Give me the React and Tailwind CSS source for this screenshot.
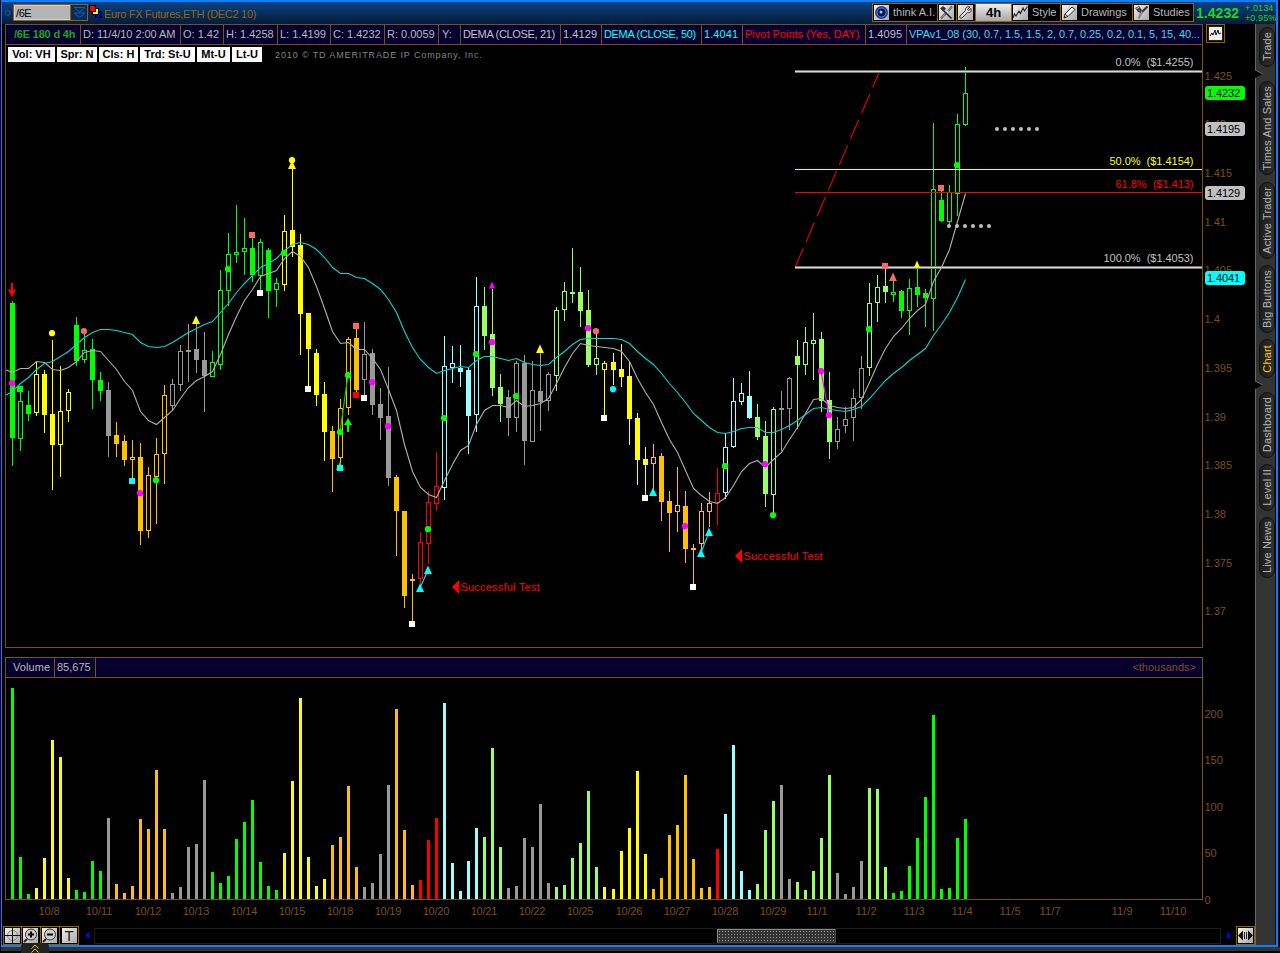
import { Fragment } from 'react';

const COLORS = {
  g: '#00ff00',
  y: '#ffff00',
  o: '#ffc000',
  n: '#999999',
  r: '#ff0000',
  a: '#99ffff',
  l: '#99ff66',
  m: '#ff00ff',
  c: '#00ffff',
  s: '#ff6666',
  w: '#ffffff',
};

// [color, high, low, body top, body bottom, hollow, volume top]
const candles = [
  ['g', 301, 466, 303, 438, 0, 688], ['g', 388, 451, 401, 439, 1, 857], ['g', 391, 421, 405, 414, 0, 894],
  ['y', 362, 416, 374, 413, 1, 888], ['y', 370, 433, 374, 415, 0, 858], ['y', 340, 490, 414, 445, 0, 740],
  ['y', 366, 477, 411, 445, 1, 757], ['y', 389, 422, 392, 411, 1, 878], ['g', 317, 366, 325, 361, 0, 890],
  ['g', 333, 363, 350, 360, 1, 892], ['g', 339, 409, 349, 380, 0, 861], ['g', 372, 401, 380, 391, 0, 871],
  ['n', 382, 457, 390, 436, 0, 818], ['o', 422, 457, 435, 444, 0, 884], ['o', 435, 466, 441, 460, 0, 893],
  ['o', 440, 478, 457, 460, 1, 886], ['o', 443, 545, 457, 531, 0, 819], ['o', 467, 538, 475, 531, 1, 829],
  ['o', 438, 524, 454, 477, 1, 770], ['o', 385, 484, 395, 454, 1, 829], ['n', 379, 410, 384, 406, 1, 893],
  ['n', 345, 391, 351, 385, 1, 887], ['n', 324, 382, 350, 352, 0, 847], ['n', 324, 373, 349, 360, 0, 844],
  ['n', 332, 412, 360, 376, 0, 780], ['g', 351, 377, 362, 377, 1, 872], ['g', 270, 370, 290, 365, 1, 883],
  ['g', 233, 306, 254, 291, 1, 876], ['g', 205, 263, 252, 255, 1, 839], ['g', 218, 275, 248, 252, 1, 822],
  ['g', 237, 282, 248, 275, 0, 800], ['g', 239, 290, 242, 276, 1, 862], ['g', 248, 318, 250, 291, 0, 886],
  ['g', 278, 307, 283, 290, 1, 890], ['y', 215, 291, 231, 285, 1, 853], ['y', 168, 257, 230, 247, 0, 781],
  ['y', 234, 355, 245, 314, 0, 698], ['y', 313, 387, 313, 349, 0, 857], ['y', 349, 406, 353, 395, 0, 886],
  ['y', 382, 461, 394, 432, 0, 879], ['o', 426, 492, 431, 459, 0, 845], ['o', 399, 463, 408, 458, 1, 837],
  ['o', 337, 415, 339, 408, 1, 786], ['o', 328, 393, 338, 390, 0, 867], ['n', 322, 395, 354, 380, 1, 887],
  ['n', 349, 415, 353, 405, 0, 883], ['n', 388, 440, 404, 418, 0, 854], ['n', 367, 486, 416, 478, 0, 785],
  ['o', 475, 556, 477, 511, 0, 709], ['o', 511, 608, 511, 596, 0, 830], ['o', 574, 621, 579, 581, 0, 885],
  ['r', 532, 586, 542, 579, 1, 880], ['r', 491, 564, 502, 544, 1, 840], ['r', 452, 511, 486, 504, 1, 818],
  ['a', 336, 500, 366, 488, 1, 703], ['a', 346, 383, 363, 368, 1, 863], ['a', 345, 387, 368, 372, 0, 891],
  ['a', 368, 454, 370, 416, 0, 861], ['a', 277, 432, 306, 415, 1, 828], ['l', 287, 350, 306, 336, 0, 837],
  ['l', 289, 396, 334, 388, 0, 748], ['l', 374, 422, 387, 404, 0, 847], ['n', 390, 436, 397, 418, 0, 888],
  ['n', 361, 432, 363, 418, 1, 886], ['n', 355, 465, 363, 441, 0, 838], ['n', 361, 442, 390, 442, 1, 847],
  ['n', 353, 431, 391, 402, 0, 804], ['n', 372, 411, 374, 401, 1, 883], ['l', 307, 391, 310, 376, 1, 887],
  ['l', 282, 321, 291, 310, 1, 885], ['l', 248, 303, 292, 294, 0, 858], ['l', 267, 327, 292, 311, 0, 843],
  ['l', 290, 367, 310, 365, 0, 791], ['l', 334, 375, 358, 365, 1, 867], ['y', 361, 415, 363, 370, 1, 887],
  ['y', 353, 385, 362, 370, 0, 889], ['y', 344, 387, 369, 377, 0, 851], ['y', 361, 445, 376, 419, 0, 828],
  ['y', 413, 485, 418, 460, 0, 771], ['y', 447, 495, 459, 465, 0, 854], ['o', 444, 489, 457, 464, 1, 889],
  ['o', 453, 521, 456, 502, 0, 878], ['o', 491, 552, 501, 513, 0, 835], ['o', 467, 532, 505, 512, 1, 825],
  ['o', 491, 563, 506, 549, 0, 775], ['o', 544, 584, 548, 550, 0, 859], ['o', 503, 550, 511, 544, 1, 888],
  ['o', 492, 527, 503, 512, 1, 887], ['r', 468, 525, 493, 503, 1, 849], ['a', 433, 499, 447, 493, 1, 814],
  ['a', 378, 448, 401, 447, 1, 745], ['a', 383, 405, 393, 402, 1, 871], ['a', 371, 419, 396, 418, 0, 890],
  ['l', 404, 440, 417, 437, 0, 884], ['l', 421, 507, 436, 494, 0, 830], ['l', 407, 513, 409, 495, 1, 801],
  ['n', 391, 451, 408, 410, 0, 785], ['n', 377, 430, 378, 409, 1, 879], ['l', 340, 429, 356, 365, 0, 882],
  ['l', 327, 375, 342, 365, 1, 890], ['l', 313, 380, 340, 344, 1, 871], ['l', 332, 412, 339, 401, 0, 838],
  ['l', 372, 459, 400, 442, 0, 775], ['n', 417, 449, 429, 442, 1, 873], ['n', 407, 433, 419, 426, 1, 894],
  ['n', 389, 441, 398, 418, 1, 887], ['n', 356, 409, 368, 398, 1, 861], ['l', 283, 376, 303, 368, 1, 788],
  ['l', 275, 322, 287, 303, 1, 789], ['l', 269, 303, 286, 292, 0, 867], ['g', 281, 302, 292, 295, 1, 893],
  ['g', 290, 318, 291, 311, 0, 891], ['g', 279, 335, 288, 311, 1, 866], ['g', 267, 307, 287, 295, 0, 838],
  ['g', 289, 327, 293, 298, 0, 797], ['g', 123, 331, 189, 299, 1, 715], ['g', 191, 222, 200, 221, 0, 889],
  ['g', 185, 225, 192, 222, 1, 888], ['g', 114, 216, 124, 194, 1, 838], ['g', 67, 126, 93, 125, 1, 819],
];

const dema21 = [
  372, 368, 368, 361, 362, 369, 370, 367, 361, 352, 350, 351, 360, 369, 381, 390, 411, 420, 424, 417,
  410, 398, 387, 380, 376, 371, 354, 334, 316, 300, 289, 276, 273, 270, 258, 251, 256, 267, 286, 308,
  331, 343, 342, 349, 349, 358, 369, 389, 410, 444, 471, 487, 494, 497, 480, 464, 450, 445, 424, 410,
  405, 405, 407, 400, 406, 405, 403, 398, 383, 367, 353, 343, 345, 346, 347, 348, 351, 361, 378, 392,
  404, 422, 439, 452, 470, 488, 495, 501, 503, 497, 485, 471, 463, 460, 467, 459, 452, 439, 427, 413,
  399, 398, 405, 407, 408, 407, 399, 382, 364, 348, 336, 328, 318, 310, 304, 281, 267, 249, 221, 193,
];

const dema50 = [
  391, 383, 377, 369, 363, 361, 356, 351, 344, 337, 332, 329, 329, 330, 332, 334, 342, 346, 347, 346,
  342, 337, 332, 328, 324, 321, 312, 303, 292, 283, 275, 267, 263, 258, 250, 244, 242, 244, 249, 257,
  267, 273, 273, 277, 278, 283, 289, 299, 312, 331, 347, 359, 367, 373, 370, 368, 366, 367, 360, 356,
  356, 358, 360, 358, 362, 364, 365, 364, 357, 351, 344, 339, 338, 338, 338, 338, 339, 343, 351, 358,
  364, 373, 383, 392, 402, 413, 420, 427, 432, 433, 431, 428, 427, 427, 432, 432, 429, 425, 420, 414,
  408, 407, 409, 410, 411, 409, 406, 398, 389, 380, 373, 367, 360, 354, 348, 335, 324, 312, 297, 279,
];

// [shape, color, x, y]
const markers = [
  ['dot', 'm', 12, 383], ['sq', 'g', 20, 389], ['dot', 'y', 52, 333], ['dot', 's', 84, 331],
  ['sq', 'c', 132, 481], ['dot', 'm', 140, 493], ['dot', 'g', 156, 480], ['tri', 'y', 196, 320],
  ['dot', 'g', 228, 269], ['sq', 's', 252, 235], ['sq', 'w', 260, 293], ['dot', 'g', 284, 253],
  ['dot', 'y', 292, 160], ['tri', 'y', 292, 165], ['sq', 'w', 308, 389], ['tri', 'g', 340, 466],
  ['dot', 'g', 340, 432], ['sq', 'c', 340, 468], ['dot', 'g', 348, 375], ['sq', 's', 356, 326],
  ['sq', 'r', 356, 395], ['sq', 'w', 364, 398], ['dot', 'm', 372, 382], ['dot', 'm', 388, 426],
  ['sq', 'w', 412, 624], ['tri', 'c', 420, 588], ['dot', 'g', 428, 529], ['tri', 'c', 428, 570],
  ['dot', 'g', 444, 418], ['dot', 'g', 476, 354], ['small', 'm', 492, 285], ['dot', 'm', 492, 342],
  ['dot', 'g', 516, 396], ['tri', 'y', 540, 349], ['dot', 'm', 588, 328], ['dot', 's', 596, 331],
  ['sq', 'w', 604, 418], ['dot', 'c', 613, 389], ['sq', 'w', 645, 498], ['tri', 'c', 653, 492],
  ['dot', 'm', 685, 526], ['sq', 'w', 693, 587], ['tri', 'c', 701, 553], ['tri', 'c', 709, 532],
  ['dot', 'g', 725, 466], ['dot', 'm', 765, 464], ['dot', 'g', 773, 515], ['dot', 'm', 821, 371],
  ['dot', 'm', 829, 415], ['dot', 'g', 869, 329], ['sq', 's', 885, 266], ['tri', 's', 893, 277],
  ['small', 'y', 917, 264], ['sq', 's', 941, 188], ['dot', 'g', 957, 165],
];

const dates = [
  ['10/8', 49], ['10/11', 99], ['10/12', 148], ['10/13', 196], ['10/14', 244], ['10/15', 292],
  ['10/18', 340], ['10/19', 388], ['10/20', 436], ['10/21', 484], ['10/22', 532], ['10/25', 580],
  ['10/26', 629], ['10/27', 677], ['10/28', 725], ['10/29', 773], ['11/1', 817], ['11/2', 866],
  ['11/3', 914], ['11/4', 962], ['11/5', 1010], ['11/7', 1050], ['11/9', 1122], ['11/10', 1173],
];

const prices = [
  ['1.425', 76], ['1.42', 124], ['1.415', 173], ['1.41', 222], ['1.405', 270], ['1.4', 319],
  ['1.395', 368], ['1.39', 417], ['1.385', 465], ['1.38', 514], ['1.375', 563], ['1.37', 611],
];

const priceTags = [
  ['1.4232', 93, '#00ff00'],
  ['1.4195', 129, '#c0c0c0'],
  ['1.4129', 193, '#c0c0c0'],
  ['1.4041', 278, '#00ffff'],
];

const headerCells = [
  ['/6E 180 d 4h', 'w-[75px] pl-2 font-bold text-[#1ba324] tracking-[-0.2px]'],
  ['D: 11/4/10 2:00 AM', 'w-[100px] pl-0.5 tracking-[-0.05px] text-[#b8b8b8]'],
  ['O: 1.42', 'w-[43px] pl-0.5 text-[#b8b8b8]'],
  ['H: 1.4258', 'w-[54px] pl-0.5 text-[#b8b8b8]'],
  ['L: 1.4199', 'w-[53px] pl-0.5 text-[#b8b8b8]'],
  ['C: 1.4232', 'w-[54px] pl-0.5 text-[#b8b8b8]'],
  ['R: 0.0059', 'w-[54px] pl-0.5 text-[#b8b8b8]'],
  ['Y:', 'w-[22px] pl-[3px] text-[#b8b8b8]'],
  ['DEMA (CLOSE, 21)', 'w-[100px] pl-0.5 tracking-[-0.33px] text-[#c0c0c0]'],
  ['1.4129', 'w-[41px] pl-0.5 tracking-[0.1px] text-[#c0c0c0]'],
  ['DEMA (CLOSE, 50)', 'w-[100px] pl-0.5 tracking-[-0.33px] text-[#00ffff]'],
  ['1.4041', 'w-[41px] pl-0.5 tracking-[0.1px] text-[#00ffff]'],
  ['Pivot Points (Yes, DAY)', 'w-[123px] pl-0.5 text-[#ff0000]'],
  ['1.4095', 'w-[41px] pl-0.5 tracking-[0.1px] text-[#c0c0c0]'],
  ['VPAv1_08 (30, 0.7, 1.5, 1.5, 2, 0.7, 0.25, 0.2, 0.1, 5, 15, 40...', 'w-[296px] pl-0.5 tracking-[-0.08px] text-[#33ddee]'],
];

const chips = [
  ['Vol: VH', 'w-[47px]'],
  ['Spr: N', 'w-10'],
  ['Cls: H', 'w-[39px]'],
  ['Trd: St-U', 'w-[55px]'],
  ['Mt-U', 'w-[33px]'],
  ['Lt-U', 'w-[30px]'],
];

const tabs = [
  ['Trade', 'h-10 mt-[3px]'],
  ['Times And Sales', 'h-[94px] mt-3.5'],
  ['Active Trader', 'h-[77px] mt-[7px]'],
  ['Big Buttons', 'h-[68px] mt-1.5'],
  ['Chart', 'h-[39px] mt-[6px]'],
  ['Dashboard', 'h-[66px] mt-[14px]'],
  ['Level II', 'h-[47px] mt-1.5'],
  ['Live News', 'h-[61px] mt-1.5'],
];

const xAt = (i) => 12 + i * 8 + (i >= 75 ? 1 : 0);

const linePoints = (values, start) =>
  `6,${start} ` + values.map((v, i) => `${xAt(i) + 0.5},${v + 0.5}`).join(' ');

function Candle({ candle, x }) {
  const [color, high, low, top, bottom, hollow] = candle;
  const fill = COLORS[color];
  if (!hollow) {
    return (
      <g fill={fill}>
        <rect x={x} y={high} width="1" height={low - high} />
        <rect x={x - 2} y={top} width="5" height={bottom - top} />
      </g>
    );
  }
  return (
    <g fill={fill}>
      <rect x={x} y={high} width="1" height={Math.max(top - high, 0)} />
      <rect x={x} y={bottom} width="1" height={Math.max(low - bottom, 0)} />
      <rect x={x - 1.5} y={top + 0.5} width="4" height={bottom - top - 1} fill="none" stroke={fill} />
    </g>
  );
}

function Marker({ shape, color, x, y }) {
  const fill = COLORS[color];
  if (shape === 'dot') return <circle cx={x} cy={y + 0.2} r="3.1" fill={fill} />;
  if (shape === 'sq') return <rect x={x - 3} y={y - 3} width="6" height="6" fill={fill} />;
  if (shape === 'small') return <path d={`M${x} ${y - 3.5}l3 7h-6z`} fill={fill} />;
  return <path d={`M${x} ${y - 4.5}l4 8.5h-8z`} fill={fill} />;
}

function PriceChart() {
  return (
    <svg width="1253" height="612" viewBox="2 45 1253 612" className="block" fontSize="11">
      <path d="M5.5 45V647.5H1202.5V45" fill="none" stroke="#7b4f1a" shapeRendering="crispEdges" />

      <g shapeRendering="crispEdges">
        {candles.map((candle, i) => (
          <Candle key={i} candle={candle} x={xAt(i)} />
        ))}
      </g>

      {/* fib retracement */}
      <path d="M795 267.5L879.5 71.5" stroke="#dd0000" strokeWidth="1.2" strokeDasharray="21 7" />
      <g shapeRendering="crispEdges">
        <rect x="795" y="70" width="407" height="3" fill="#777" />
        <rect x="795" y="71" width="407" height="1" fill="#d8d8d8" />
        <rect x="795" y="169" width="407" height="1" fill="#ffff00" />
        <rect x="795" y="192" width="407" height="1" fill="#ff0000" />
        <rect x="795" y="266" width="407" height="3" fill="#777" />
        <rect x="795" y="267" width="407" height="1" fill="#d8d8d8" />
      </g>
      <g textAnchor="end">
        <text x="1193.5" y="66" fill="#c0c0c0" textLength="78">0.0%{'\u00a0\u00a0'}($1.4255)</text>
        <text x="1193.5" y="165" fill="#ffff00" textLength="84">50.0%{'\u00a0\u00a0'}($1.4154)</text>
        <text x="1193.5" y="188" fill="#ff0000" textLength="78">61.8%{'\u00a0\u00a0'}($1.413)</text>
        <text x="1193.5" y="262" fill="#c0c0c0" textLength="90">100.0%{'\u00a0\u00a0'}($1.4053)</text>
      </g>

      <polyline points={linePoints(dema50, 395)} fill="none" stroke="#00d8d8" strokeWidth="1.1" />
      <polyline points={linePoints(dema21, 370)} fill="none" stroke="#b0b0b0" strokeWidth="1.1" />

      {[0, 1, 2, 3, 4, 5].map((i) => (
        <Fragment key={i}>
          <circle cx={997 + i * 8} cy="129" r="2" fill="#c0c0c0" />
          <circle cx={949 + i * 8} cy="226" r="2" fill="#c0c0c0" />
        </Fragment>
      ))}

      <path d="M340 432L348 375" stroke="#00cc00" strokeWidth="1.2" />
      <path d="M420 588L428 570M701 553L709 532" stroke="#00dddd" strokeWidth="1.2" />
      <path d="M821 371L829 415" stroke="#ff00ff" strokeWidth="1.2" />
      {markers.map(([shape, color, x, y], i) => (
        <Marker key={i} shape={shape} color={color} x={x} y={y} />
      ))}
      <path d="M11 283h2v6.500h3L12 297L8 289.500h3z" fill="#ff0000" />
      <path d="M347 432v-7h-3L348 418L352 425h-3v7z" fill="#00ff00" />

      <g fill="#ff0000">
        <path d="M452 587l7-7v14z" />
        <text x="460.500" y="591" textLength="79">Successful Test</text>
        <path d="M735 556l7-7v14z" />
        <text x="743.500" y="560" textLength="79">Successful Test</text>
      </g>

      <g fill="#7b4f1a">
        {prices.map(([label, y]) => (
          <text key={label} x="1204.500" y={y + 4}>
            {label}
          </text>
        ))}
      </g>
      {priceTags.map(([label, y, fill]) => (
        <g key={label}>
          <rect x="1205" y={y - 7} width="40" height="14" rx="3" fill={fill} />
          <text x="1207" y={y + 4} fill="#000" textLength="33">{label}</text>
        </g>
      ))}
    </svg>
  );
}

function VolumeChart() {
  return (
    <svg width="1253" height="248" viewBox="2 678 1253 248" className="block" fontSize="11">
      <path d="M5.5 678V899.5H1202.5V678" fill="none" stroke="#7b4f1a" shapeRendering="crispEdges" />
      {candles.map((candle, i) => (
        <rect key={i} x={xAt(i) - 1} y={candle[6]} width="3" height={899 - candle[6]} fill={COLORS[candle[0]]} />
      ))}
      <g fill="#7b4f1a">
        {[[200, 714], [150, 760], [100, 807], [50, 853], [0, 900]].map(([label, y]) => (
          <text key={label} x="1204.500" y={y + 4}>{label}</text>
        ))}
        {dates.map(([label, x]) => (
          <text key={label} x={x} y="915" textAnchor="middle" textLength={label.length * 5.3}>
            {label}
          </text>
        ))}
      </g>
    </svg>
  );
}

function IconBox({ children }) {
  return (
    <svg width="17" height="17" viewBox="0 0 17 17" className="shrink-0 block">
      <defs>
        <linearGradient id="steel" x1="0" y1="0" x2="1" y2="1">
          <stop offset="0" stopColor="#f0f0f0" />
          <stop offset="1" stopColor="#aaaaaa" />
        </linearGradient>
      </defs>
      <rect x="1" y="1" width="15" height="15" fill="url(#steel)" />
      {children}
    </svg>
  );
}

function ToolsIcon() {
  return (
    <IconBox>
      <path d="M14 2.500L10 7M8.500 8.500L3 14.500" fill="none" stroke="#444" strokeWidth="2" />
      <path d="M13.500 3L3.500 14" fill="none" stroke="#eee" strokeWidth="0.7" />
      <path d="M4 5l9.500 9.500" fill="none" stroke="#222" strokeWidth="1.6" />
      <path d="M2 4.500L5 2l3 2.500L5.500 7.500z" fill="#333" />
    </IconBox>
  );
}

function WrenchIcon() {
  return (
    <IconBox>
      <path d="M13 3l-2.500 2.500 1 1L14 4.500c1 3-1 4.500-3.500 4L5 14c-1.500 1-3-.5-2-2l5.500-5.500C8 4 10 2 13 3z" fill="#ddd" stroke="#333" />
    </IconBox>
  );
}

function LineIcon() {
  return (
    <IconBox>
      <path d="M1 14l1.500-4 1.500 2 3-5 1.500 2.500L11 4l1.500 3L15.500 2.500" fill="none" stroke="#222" strokeWidth="1.1" />
    </IconBox>
  );
}

function PencilIcon() {
  return (
    <IconBox>
      <path d="M3 14l1-4 7-7 3 2.500-7 7zM4 10l3 2.500" fill="#f5f5f5" stroke="#222" />
      <path d="M3 14l.5-2 1.500 1z" fill="#111" />
    </IconBox>
  );
}

function StudiesIcon() {
  return (
    <IconBox>
      <path d="M14.500 2.500L9 8" stroke="#333" strokeWidth="2.200" />
      <path d="M9 7.500L5.500 14.500" stroke="#888" strokeWidth="2.400" />
      <path d="M2 4l4-2 3 4-1.500 3L5 8z" fill="#444" />
      <path d="M3.500 4.500L6 3.500" stroke="#ddd" />
    </IconBox>
  );
}

function ToolButton({ className, icon, label }) {
  return (
    <button className={`flex h-[19px] items-center border-y border-r border-[#966200] bg-black text-[11px] text-[#b8b8b8] ${className}`}>
      {icon}
      {label && <span className="ml-[3px] whitespace-nowrap">{label}</span>}
    </button>
  );
}

function TitleBar() {
  return (
    <div className="flex h-[22px] shrink-0 bg-gradient-to-b from-[#0c4284] to-[#041c38] pl-[3px]">
      <svg width="8" height="22" viewBox="0 0 8 22">
        <circle cx="2.500" cy="11" r="2.500" fill="none" stroke="#0a5ab0" />
      </svg>
      <div className="mt-0.5 flex h-[17px] w-[75px] border border-[#966200]">
        <div className="w-14 border border-r-0 border-[#d0d0d0] bg-[#b4b4b4] pl-px text-[11px] leading-[15px] tracking-[-0.4px] text-black">/6E</div>
        <div className="flex flex-1 items-center justify-center border-l border-[#966200] bg-[#082b55]">
          <svg width="13" height="13" viewBox="0 0 13 13" fill="none" stroke="#0a60c0">
            <path d="M1 1.500h11L6.500 6zM1 7h11L6.500 11.500z" />
          </svg>
        </div>
      </div>
      <svg width="14" height="14" viewBox="0 0 14 14" className="mt-[3px] ml-px" shapeRendering="crispEdges">
        <rect x="6.500" y="6.500" width="6" height="6" fill="#0000ff" stroke="#000" />
        <rect x="3.500" y="3.500" width="6" height="6" fill="#ffff00" stroke="#000" />
        <rect x="0.500" y="0.500" width="6" height="6" fill="#ff0000" stroke="#000" />
      </svg>
      <span className="ml-px text-[11px] leading-6 tracking-[-0.3px] whitespace-nowrap text-[#966410]">Euro FX Futures,ETH (DEC2 10)</span>
      <div className="ml-auto flex shrink-0 pt-px">
        <ToolButton
          className="w-[66px] border-l"
          icon={
            <IconBox>
              <circle cx="8.500" cy="8.500" r="6.500" fill="#1a3f8a" />
              <circle cx="8.500" cy="8.500" r="4.500" fill="#06155a" stroke="#5a8ad0" />
              <circle cx="8" cy="8" r="1.500" fill="#9ecbff" />
            </IconBox>
          }
          label="think A.I."
        />
        <ToolButton className="w-[19px]" icon={<ToolsIcon />} />
        <ToolButton className="w-[19px]" icon={<WrenchIcon />} />
        <button className="h-[19px] w-9 border-y border-r border-[#966200] bg-gradient-to-b from-[#eeeeee] to-[#a8a8a8] text-[13px] leading-[17px] font-bold text-black">4h</button>
        <ToolButton className="w-[49px]" icon={<LineIcon />} label="Style" />
        <ToolButton className="w-[72px]" icon={<PencilIcon />} label="Drawings" />
        <ToolButton className="w-[61px]" icon={<StudiesIcon />} label="Studies" />
        <span className="w-[51px] pl-0.5 text-[14px] leading-[21px] font-bold tracking-[0.05px] text-[#1ed81e]">1.4232</span>
        <div className="w-[31px] text-[9px] leading-[10px] tracking-[0.1px] text-[#1ed81e]">
          <div>+.0134</div>
          <div>+0.95%</div>
        </div>
      </div>
    </div>
  );
}

function HeaderRow() {
  return (
    <div className="flex h-[21px] shrink-0 pl-[3px]">
      <div className="flex w-[1198px] border-y border-l border-[#7b4f1a] bg-[#06002f] text-[11px] leading-[19px]">
        {headerCells.map(([label, className], i) => (
          <div key={i} className={`shrink-0 overflow-hidden border-r border-[#7b4f1a] whitespace-nowrap ${className}`}>
            {label}
          </div>
        ))}
      </div>
      <div className="ml-[3px] h-[19px] w-[19px] border border-[#966200]">
        <IconBox>
          <rect x="1.500" y="1.500" width="14" height="14" fill="#eee" stroke="#222" />
          <path d="M3 11l2-3 1 2 2-5 1 5 2-5 1 4 2-1" fill="none" stroke="#111" />
        </IconBox>
      </div>
    </div>
  );
}

function SideTabs() {
  return (
    <div className="relative flex w-5 shrink-0 flex-col items-end border-l border-[#666] bg-[#333]">
      {tabs.map(([label, className]) => (
        <div
          key={label}
          className={`flex w-4 shrink-0 items-center justify-center rounded-full border border-[#111] bg-gradient-to-r from-[#1c1c1c] to-[#303030] ${className}`}
        >
          <span className={`rotate-180 text-[11px] leading-[14px] tracking-[0.15px] whitespace-nowrap [writing-mode:vertical-rl] ${label === 'Chart' ? 'text-[#ffc800]' : 'text-[#b4b4b4]'}`}>
            {label}
          </span>
        </div>
      ))}
      {[['a', 'top-[46px]'], ['b', 'top-[357px]']].map(([key, className]) => (
        <svg key={key} width="9" height="8" viewBox="0 0 9 8" className={`absolute -left-px ${className}`}>
          <path d="M0 0l8 4-8 4z" fill="#000" />
          <path d="M0 0l8 4" stroke="#666" />
        </svg>
      ))}
    </div>
  );
}

function BottomBar() {
  return (
    <div className="flex h-[19px] shrink-0 items-center pl-px">
      <ToolButton
        className="w-[19px] border-l"
        icon={
          <IconBox>
            <circle cx="8.500" cy="8.500" r="5" fill="none" stroke="#888" />
            <path d="M1 8.500h15M8.500 1v15" stroke="#111" />
          </IconBox>
        }
      />
      <ToolButton
        className="w-[19px]"
        icon={
          <IconBox>
            <circle cx="9" cy="7.500" r="5.500" fill="#ccc" stroke="#333" />
            <path d="M6 7.500h6M9 4.500v6" stroke="#000" strokeWidth="2" />
            <path d="M5 12l-3 3" stroke="#222" strokeWidth="2" />
          </IconBox>
        }
      />
      <ToolButton
        className="w-[19px]"
        icon={
          <IconBox>
            <circle cx="9" cy="7.500" r="5.500" fill="#ccc" stroke="#333" />
            <path d="M6 7.500h6" stroke="#000" strokeWidth="2" />
            <path d="M5 12l-3 3" stroke="#222" strokeWidth="2" />
          </IconBox>
        }
      />
      <button className="flex h-[19px] w-[19px] items-center justify-center border-y border-r border-[#966200] bg-black">
        <span className="h-[15px] w-[15px] bg-gradient-to-br from-[#eeeeee] to-[#aaaaaa] text-center text-[15px] leading-[15px] text-[#222]">T</span>
      </button>
      <svg width="15" height="19" viewBox="0 0 15 19">
        <path d="M10 5.500v8l-4-4z" fill="#0000ff" />
      </svg>
      <div className="flex h-4 flex-1 border border-[#1c1c1c]">
        <div className="ml-[622px] h-[14px] w-[119px] border border-t-[#888] border-r-[#444] border-b-[#444] border-l-[#888] bg-[#333] bg-[radial-gradient(#999_0.6px,transparent_0.8px)] bg-[length:3px_3px]" />
      </div>
      <svg width="15" height="19" viewBox="0 0 15 19">
        <path d="M6 5.500v8l4-4z" fill="#0000ff" />
      </svg>
      <ToolButton
        className="w-[19px] border-l"
        icon={
          <IconBox>
            <path d="M1 8.500l5-5v10zM16 8.500l-5-5v10z" fill="#111" />
            <path d="M7.500 5v7M9.500 5v7" stroke="#222" />
          </IconBox>
        }
      />
    </div>
  );
}

export default function App() {
  return (
    <div className="relative flex h-[953px] w-[1280px] flex-col overflow-hidden bg-black font-['Liberation_Sans',Arial,sans-serif]">
      <div className="mr-0.5 ml-px flex h-[947px] shrink-0 flex-col border-t-2 border-r-2 border-b-2 border-l border-[#0880ff]">
        <TitleBar />
        <div className="flex flex-1">
          <div className="flex w-[1253px] flex-col">
            <HeaderRow />
            <div className="relative">
              <PriceChart />
              <div className="absolute top-0.5 left-1.5 flex gap-0.5">
                {chips.map(([label, className]) => (
                  <span key={label} className={`h-[15px] bg-white text-center text-[11px] leading-[15px] font-bold whitespace-nowrap text-black ${className}`}>
                    {label}
                  </span>
                ))}
                <span className="ml-[11px] text-[9px] leading-4 tracking-[0.88px] whitespace-nowrap text-[#858585]">2010 © TD AMERITRADE IP Company, Inc.</span>
              </div>
            </div>
            <div className="ml-[3px] flex h-[21px] w-[1198px] shrink-0 border border-[#7b4f1a] bg-[#06002f] text-[11px] leading-[19px] text-[#b8b8b8]">
              <div className="w-[49px] border-r border-[#7b4f1a] pl-[7px] tracking-[0.1px]">Volume</div>
              <div className="w-[41px] border-r border-[#7b4f1a] pl-0.5">85,675</div>
              <div className="ml-auto pr-1.5 text-[#7b4f1a]">&lt;thousands&gt;</div>
            </div>
            <VolumeChart />
            <BottomBar />
          </div>
          <SideTabs />
        </div>
      </div>
      <div className="ml-px h-1 shrink-0 bg-[#333]" />
      <div className="absolute top-[943px] left-[21px] flex h-2.5 w-7 items-center justify-center rounded-t bg-[#222]">
        <svg width="10" height="9" viewBox="0 0 10 9" fill="none" stroke="#ffc800">
          <path d="M1.500 4.500L5 1l3.500 3.500M1.500 8.500L5 5l3.500 3.500" />
        </svg>
      </div>
    </div>
  );
}
